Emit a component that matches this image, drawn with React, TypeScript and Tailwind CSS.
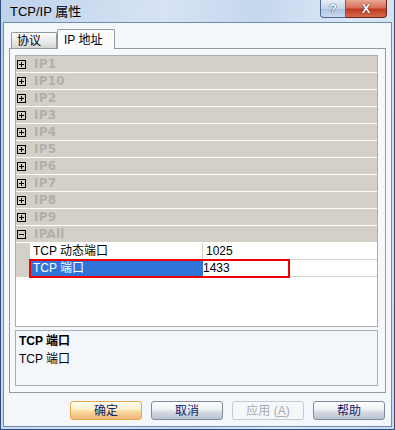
import React from "react";

const groups = ["IP1", "IP10", "IP2", "IP3", "IP4", "IP5", "IP6", "IP7", "IP8", "IP9"];

function Box({ minus }: { minus?: boolean }) {
  return (
    <svg width="9" height="9" viewBox="0 0 9 9" className="block">
      <rect x="0.5" y="0.5" width="8" height="8" fill="none" stroke="#000" />
      <line x1="2" y1="4.5" x2="7" y2="4.5" stroke="#000" />
      {!minus && <line x1="4.5" y1="2" x2="4.5" y2="7" stroke="#000" />}
    </svg>
  );
}

function GroupRow({ label, minus }: { label: string; minus?: boolean }) {
  return (
    <div className="flex items-center h-[17px] bg-[#d4d0c8] border-b border-white shrink-0">
      <div className="ml-[1px]">
        <Box minus={minus} />
      </div>
      <span className="ml-[8px] font-bold text-[12px] leading-none text-[#b2afa8] font-['DejaVu_Sans','Liberation_Sans',sans-serif] tracking-[0.2px]">
        {label}
      </span>
    </div>
  );
}

export default function App() {
  return (
    <div className="w-[395px] h-[430px] flex flex-col overflow-hidden bg-[linear-gradient(100deg,#bed2eb_0%,#d7e3f3_35%,#c5d7ee_55%,#dce7f5_75%,#c9daef_100%)] border-l border-r border-b border-[#2d4f7e] font-['Liberation_Sans','Noto_Sans_CJK_SC',sans-serif] text-[12px] text-black">
      {/* Title bar */}
      <div className="h-[22px] flex items-start shrink-0">
        <div className="pl-[9px] pt-[4px] text-[13px] leading-[15px] text-black">TCP/IP 属性</div>
        <div className="ml-auto mr-[7px] flex">
          <div className="w-[26px] h-[18px] border border-t-0 border-[#4f6a90] rounded-bl-[4px] bg-[linear-gradient(#e4edf7,#c6d6ea_50%,#adc3df_51%,#c9daee)] flex items-center justify-center">
            <span className="text-white font-bold text-[13px] leading-none [text-shadow:0_0_1px_#1d2f4a,0_0_1px_#1d2f4a]">?</span>
          </div>
          <div className="w-[41px] h-[18px] border border-t-0 border-l-0 border-[#6b2418] rounded-br-[4px] bg-[linear-gradient(#e9a796,#d7715a_45%,#c2391f_55%,#d46a4e)] flex items-center justify-center">
            <span className="text-white font-bold text-[13px] leading-none [text-shadow:0_0_1px_#4a130a,0_0_1px_#4a130a]">X</span>
          </div>
        </div>
      </div>

      {/* Client area */}
      <div className="flex-1 mx-[2px] mb-[2px] border border-[#6f8db3] bg-[#f3f6fb] flex flex-col">
        {/* Tabs */}
        <div className="h-[25px] flex items-end pl-[7px] shrink-0">
          <div className="w-[46px] h-[16px] border border-b-0 border-[#919b9c] rounded-t-[2px] bg-[linear-gradient(#fdfdfd,#e8e8e8_60%,#d4d4d4)] flex items-center pl-[5px] text-[12px] leading-none">
            协议
          </div>
          <div className="w-[58px] h-[20px] -mb-px relative z-10 border border-b-0 border-[#919b9c] rounded-t-[2px] bg-[#fbfcfe] flex items-center pl-[6px] text-[12px] leading-none">
            IP 地址
          </div>
        </div>

        {/* Panel */}
        <div className="ml-[5px] mr-[5px] h-[345px] border border-[#919b9c] bg-[#f6f8fc] pl-[5px] pr-[7px] pt-[6px] shrink-0">
          <div className="h-[272px] border border-[#a9aeb6] bg-white flex flex-col">
            {groups.map((g) => (
              <GroupRow key={g} label={g} />
            ))}
            <GroupRow label="IPAll" minus />
            <div className="flex h-[17px] shrink-0">
              <div className="w-[14px] bg-[#d4d0c8]" />
              <div className="w-[173px] border-b border-r border-[#d4d0c8] pl-[3px] flex items-center leading-none">
                TCP 动态端口
              </div>
              <div className="flex-1 border-b border-[#d4d0c8] pl-[3px] flex items-center leading-none">1025</div>
            </div>
            <div className="flex h-[17px] shrink-0 relative">
              <div className="w-[14px] bg-[#d4d0c8]" />
              <div className="w-[173px] border-b border-[#d4d0c8] bg-[#3174d9] text-white pl-[3px] flex items-center leading-none">
                TCP 端口
              </div>
              <div className="flex-1 border-b border-[#d4d0c8] flex items-center leading-none">1433</div>
              <div className="absolute left-[13px] top-[-1px] w-[261px] h-[19px] border-2 border-[#f00000]" />
            </div>
            <div className="flex-1" />
          </div>
          <div className="mt-[3px] h-[56px] border border-[#a9aeb6] bg-[#f3f6fb] px-[3px] pt-[3px] flex flex-col">
            <div className="font-bold leading-[15px]">TCP 端口</div>
            <div className="leading-[15px] mt-[3px]">TCP 端口</div>
          </div>
        </div>

        {/* Buttons */}
        <div className="mt-[8px] mr-[6px] flex justify-end gap-[9px]">
          <button className="w-[72px] h-[19px] rounded-[3px] border border-[#e1a948] bg-[linear-gradient(#fffef2,#fbf0c8_45%,#f7d9a0_55%,#f0b57a)] text-[#10206a] text-[12px] leading-none flex items-center justify-center">
            确定
          </button>
          <button className="w-[72px] h-[19px] rounded-[3px] border border-[#7d8a9c] bg-[linear-gradient(#ffffff,#eef1f5_45%,#d9dee6_55%,#b9c2cf)] text-[#10206a] text-[12px] leading-none flex items-center justify-center">
            取消
          </button>
          <button className="w-[72px] h-[19px] rounded-[3px] border border-[#c4cad3] bg-[#f5f7fa] text-[#a7abb1] text-[12px] leading-none flex items-center justify-center">
            应用 (<span className="underline">A</span>)
          </button>
          <button className="w-[72px] h-[19px] rounded-[3px] border border-[#7d8a9c] bg-[linear-gradient(#ffffff,#eef1f5_45%,#d9dee6_55%,#b9c2cf)] text-[#10206a] text-[12px] leading-none flex items-center justify-center">
            帮助
          </button>
        </div>
      </div>
    </div>
  );
}
